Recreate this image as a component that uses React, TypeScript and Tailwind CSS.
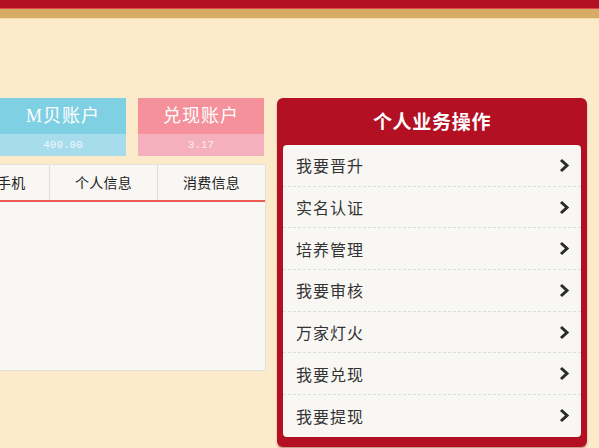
const menu = ['我要晋升', '实名认证', '培养管理', '我要审核', '万家灯火', '我要兑现', '我要提现']

function Chevron() {
  return (
    <svg width="11" height="15" viewBox="0 0 11 15" className="shrink-0">
      <path d="M2 2 L8 7.5 L2 13" fill="none" stroke="#2a2a2a" strokeWidth="3" />
    </svg>
  )
}

export default function App() {
  return (
    <div
      className="w-[599px] h-[448px] overflow-hidden bg-[#fcebcb] relative"
      style={{ fontFamily: '"Liberation Serif", "Noto Sans CJK SC", serif' }}
    >
      <div className="h-[8px] bg-[#b31024]" />
      <div className="h-[1px] bg-[#e04a4a]" />
      <div className="h-[9px] bg-[#d5ab66]" />
      <div className="h-[1px] bg-[#f3dcae]" />

      <div className="flex pt-[79px] gap-[11px]">
        <div className="w-[266px] shrink-0">
          <div className="flex gap-[12px]">
            <div className="w-[126px]">
              <div className="h-[36px] bg-[#80d0e4] flex items-center justify-center text-white text-[18px] tracking-[1px]">
                M贝账户
              </div>
              <div className="h-[22px] bg-[#a6dcec] flex items-center justify-center text-[#eef8fc] text-[11px]" style={{ fontFamily: '"Liberation Mono", monospace' }}>
                409.00
              </div>
            </div>
            <div className="w-[126px]">
              <div className="h-[36px] bg-[#f4919a] flex items-center justify-center text-white text-[18px] tracking-[1px]">
                兑现账户
              </div>
              <div className="h-[22px] bg-[#f4b0bd] flex items-center justify-center text-[#fcecef] text-[11px]" style={{ fontFamily: '"Liberation Mono", monospace' }}>
                3.17
              </div>
            </div>
          </div>

          <div className="mt-[8px] bg-[#f8f7f4] border-r border-b border-[#e2dfda] h-[207px]">
            <div
              className="flex h-[38px] border-t border-[#e4e1dc] border-b-2 border-b-[#ec5a52] text-[14px] text-[#222] tracking-[0.3px]"
              style={{ fontFamily: '"Noto Sans CJK SC", sans-serif' }}
            >
              <div className="w-[50px] flex items-center border-r border-[#e0ddd8]">
                <span className="-ml-[3px]">手机</span>
              </div>
              <div className="w-[108px] flex items-center justify-center border-r border-[#e0ddd8]">
                个人信息
              </div>
              <div className="flex-1 flex items-center justify-center">消费信息</div>
            </div>
          </div>
        </div>

        <div className="w-[310px] h-[349px] bg-[#b31024] rounded-[6px] shadow-[0_2px_2px_rgba(120,0,10,0.35)] px-[6px] pb-[10px] flex flex-col">
          <div
            className="h-[47px] flex items-center justify-center text-white text-[19px] font-bold tracking-[0.7px]"
            style={{ fontFamily: '"Noto Sans CJK SC", sans-serif' }}
          >
            个人业务操作
          </div>
          <div
            className="bg-[#f8f7f4] rounded-[4px] flex flex-col"
            style={{ fontFamily: '"Noto Sans CJK SC", sans-serif' }}
          >
            {menu.map((m, i) => (
              <div
                key={m}
                className={`h-[41.7px] flex items-center justify-between pl-[13px] pr-[11px] text-[16px] tracking-[1px] text-[#333] ${
                  i < menu.length - 1 ? 'border-b border-dashed border-[#d9dde0]' : ''
                }`}
              >
                <span>{m}</span>
                <Chevron />
              </div>
            ))}
          </div>
        </div>
      </div>
    </div>
  )
}
